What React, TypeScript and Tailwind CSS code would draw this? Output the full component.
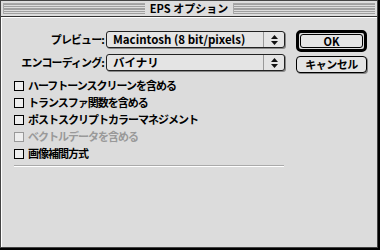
const font = { fontFamily: '"Noto Sans CJK JP", "Liberation Sans", sans-serif' };

function Stripes() {
  return (
    <div className="flex-1 flex flex-col justify-between h-[11px] border-t border-l border-[#a8a8a8] border-b-white border-r-white">
      {[0, 1, 2, 3, 4, 5].map((i) => (
        <div key={i} className="h-px bg-[#a0a0a0]" />
      ))}
    </div>
  );
}

function Popup({ label, value }: { label: string; value: string }) {
  return (
    <div className="flex items-center">
      <span className="w-[92px] whitespace-nowrap text-right pr-[2px] text-[11px] tracking-[-0.9px] font-bold text-black leading-none">{label}</span>
      <div className="w-[179px] h-[17px] flex border border-[#222] rounded-[3px] bg-[#e4e4e4] shadow-[1px_1px_0_#888]">
        <div className="flex-1 flex items-center pl-[6px] text-[11.5px] font-bold leading-none border-r border-[#999] whitespace-nowrap">{value}</div>
        <div className="w-[20px] flex items-center justify-center">
          <svg width="7" height="10" viewBox="0 0 7 10">
            <path d="M3.5 0 L7 4 L0 4 Z M0 6 L7 6 L3.5 10 Z" fill="#111" />
          </svg>
        </div>
      </div>
    </div>
  );
}

function Check({ label, disabled }: { label: string; disabled?: boolean }) {
  return (
    <div className="flex items-center h-[17px]">
      <div className={`w-[10px] h-[10px] border ${disabled ? "border-[#999]" : "border-black"} bg-[#eeeeee]`} />
      <span className={`ml-[4px] text-[11px] tracking-[-1px] font-bold leading-none whitespace-nowrap ${disabled ? "text-[#999]" : "text-black"}`}>{label}</span>
    </div>
  );
}

export default function App() {
  return (
    <div style={font} className="w-[380px] h-[250px] bg-black">
      <div className="w-[378px] h-[248px] bg-[#dcdcdc] border border-[#444] flex flex-col">
        <div className="h-[16px] flex items-center px-[2px] gap-[3px] border-b border-[#333] bg-[#dddddd]">
          <Stripes />
          <span className="text-[11px] font-bold leading-none px-[2px]">EPS オプション</span>
          <Stripes />
        </div>
        <div className="flex-1 border-l border-t border-white pl-[12px] pt-[12px]">
          <div className="flex">
            <div className="flex flex-col gap-[6px] pt-[1px]">
              <Popup label="プレビュー:" value="Macintosh (8 bit/pixels)" />
              <Popup label="エンコーディング:" value="バイナリ" />
            </div>
            <div className="ml-[11px] flex flex-col gap-[4px]">
              <div className="w-[71px] h-[22px] border-[3px] border-black rounded-[5px] p-px">
                <div className="w-full h-full border border-black rounded-[3px] bg-[#e4e4e4] flex items-center justify-center text-[11px] font-bold leading-none">OK</div>
              </div>
              <div className="w-[71px] h-[17px] border border-black rounded-[4px] bg-[#e4e4e4] shadow-[1px_1px_0_#888] flex items-center justify-center text-[11px] tracking-[-0.5px] font-bold leading-none">キャンセル</div>
            </div>
          </div>
          <div className="mt-[4px] flex flex-col">
            <Check label="ハーフトーンスクリーンを含める" />
            <Check label="トランスファ関数を含める" />
            <Check label="ポストスクリプトカラーマネジメント" />
            <Check label="ベクトルデータを含める" disabled />
            <Check label="画像補間方式" />
          </div>
          <div className="mt-[3px] w-[270px] h-[2px] bg-[#aaa] border-b border-white" />
        </div>
      </div>
    </div>
  );
}
